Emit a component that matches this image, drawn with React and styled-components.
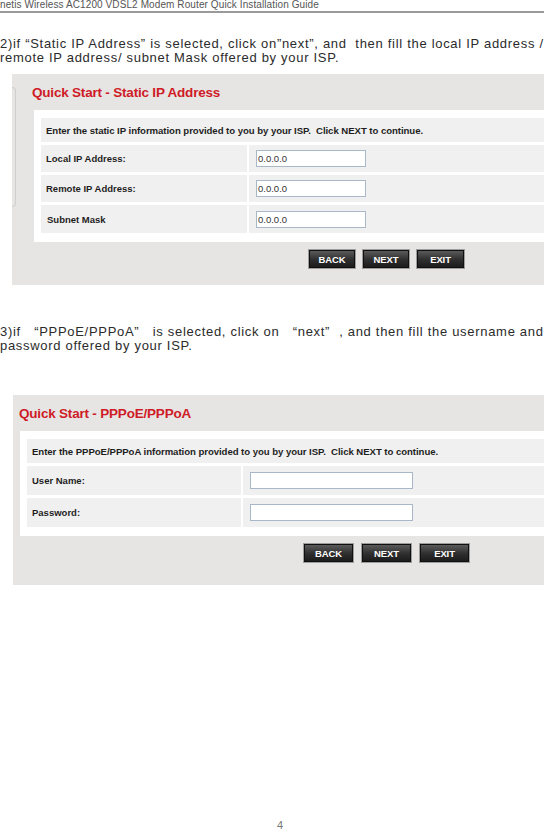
import React from 'react'
import styled, { createGlobalStyle } from 'styled-components'

const Global = createGlobalStyle`
body {
  margin: 0;
  background: #fff;
}
`;

const Page = styled.div`
width: 544px;
height: 831px;
display: flex;
flex-direction: column;
overflow: hidden;
font-family: "Liberation Sans", Arial, sans-serif;
`;

const RunningHead = styled.div`
height: 11px;
border-bottom: 2px solid #9a9a9a;
font-size: 10px;
line-height: 9px;
letter-spacing: 0.1px;
color: #555;
white-space: nowrap;
`;

const Para = styled.p`
margin: ${p => p.$top}px 0 0 0;
font-size: 13px;
line-height: 14px;
letter-spacing: 0.7px;
color: #2b2b2b;
white-space: pre-wrap;
`;

const Quote = styled.span`
margin: ${p => (p.$close ? '0 9px 0 0' : '0 0 0 9px')};
`;

const Shot = styled.div`
margin: ${p => p.$top}px 0 0 ${p => p.$left}px;
height: ${p => p.$h}px;
background: #e6e5e4;
display: flex;
font-family: "Liberation Sans", Arial, sans-serif;
`;

const NavEdge = styled.div`
flex: none;
width: 3px;
height: 118px;
margin-top: 13px;
border: 1px solid #cfcfcf;
border-left: none;
border-radius: 0 8px 8px 0;
`;

const Body = styled.div`
flex: 1;
padding-left: ${p => p.$pad}px;
display: flex;
flex-direction: column;
`;

const Title = styled.div`
height: 36px;
margin-left: ${p => p.$indent}px;
display: flex;
align-items: center;
font-size: 13.5px;
font-weight: bold;
letter-spacing: -0.2px;
color: #cf1b26;
`;

const Card = styled.div`
background: #fff;
padding: 8px 0 9px 7px;
display: flex;
flex-direction: column;
gap: 3px;
`;

const Intro = styled.div`
height: 24px;
background: #f1f0f0;
display: flex;
align-items: center;
padding-left: 5px;
font-size: 9.6px;
font-weight: bold;
letter-spacing: -0.05px;
color: #1e1e1e;
white-space: nowrap;
`;

const Row = styled.div`
height: ${p => p.$h}px;
display: grid;
grid-template-columns: ${p => p.$label}px 1fr;
gap: 2px;
`;

const Label = styled.div`
background: #f1f0f0;
display: flex;
align-items: center;
padding-left: ${p => p.$indent || 5}px;
font-size: 9.5px;
font-weight: bold;
color: #1e1e1e;
`;

const Cell = styled.div`
background: #f1f0f0;
display: flex;
align-items: center;
padding-left: 7px;
`;

const Field = styled.div`
box-sizing: border-box;
width: ${p => p.$w}px;
height: 17px;
border: 1px solid #a9b8c9;
background: #fff;
display: flex;
align-items: center;
padding-left: 1px;
font-size: 9.5px;
color: #333;
`;

const Buttons = styled.div`
display: flex;
gap: ${p => p.$gap}px;
margin: 8px 0 0 ${p => p.$left}px;
`;

const Btn = styled.div`
box-sizing: border-box;
width: ${p => p.$w}px;
height: 18px;
background: linear-gradient(#5a5a5a, #2e2e2e 55%, #1c1c1c);
border: 1px solid #101010;
box-shadow: 0 0 0 1px #9d9d9d;
display: flex;
align-items: center;
justify-content: center;
font-size: 9.5px;
font-weight: bold;
color: #fff;
letter-spacing: -0.1px;
`;

const Folio = styled.div`
margin-top: auto;
text-align: center;
font-size: 11px;
line-height: 12px;
color: #777;
padding-left: 16px;
`;

const staticRows = [
  { label: 'Local IP Address:', h: 27 },
  { label: 'Remote IP Address:', h: 27 },
  { label: 'Subnet Mask', h: 28, indent: 6 },
];

export default function App() {
  return (
    <Page>
      <Global />
      <RunningHead>netis Wireless AC1200 VDSL2 Modem Router Quick Installation Guide</RunningHead>
      <Para $top={24}>
        {'2)if “Static IP Address” is selected, click on”next”, and  then fill the local IP address /\nremote IP address/ subnet Mask offered by your ISP.'}
      </Para>

      <Shot $top={9} $left={12} $h={211}>
        <NavEdge />
        <Body $pad={18}>
          <Title $indent={-2}>Quick Start - Static IP Address</Title>
          <Card>
            <Intro>Enter the static IP information provided to you by your ISP.&nbsp; Click NEXT to continue.</Intro>
            {staticRows.map(r => (
              <Row key={r.label} $h={r.h} $label={206}>
                <Label $indent={r.indent}>{r.label}</Label>
                <Cell>
                  <Field $w={110}>0.0.0.0</Field>
                </Cell>
              </Row>
            ))}
          </Card>
          <Buttons $left={275} $gap={8}>
            <Btn $w={46}>BACK</Btn>
            <Btn $w={46}>NEXT</Btn>
            <Btn $w={47}>EXIT</Btn>
          </Buttons>
        </Body>
      </Shot>

      <Para $top={40}>
        3)if <Quote>“</Quote>PPPoE/PPPoA<Quote $close>”</Quote> is selected, click on <Quote>“</Quote>next<Quote $close>”</Quote>, and then fill the username and{'\n'}password offered by your ISP.
      </Para>

      <Shot $top={42} $left={13} $h={190}>
        <Body $pad={7}>
          <Title $indent={-1}>Quick Start - PPPoE/PPPoA</Title>
          <Card>
            <Intro>Enter the PPPoE/PPPoA information provided to you by your ISP.&nbsp; Click NEXT to continue.</Intro>
            <Row $h={29} $label={214}>
              <Label>User Name:</Label>
              <Cell><Field $w={163} /></Cell>
            </Row>
            <Row $h={29} $label={214}>
              <Label>Password:</Label>
              <Cell><Field $w={163} /></Cell>
            </Row>
          </Card>
          <Buttons $left={284} $gap={9}>
            <Btn $w={49}>BACK</Btn>
            <Btn $w={49}>NEXT</Btn>
            <Btn $w={49}>EXIT</Btn>
          </Buttons>
        </Body>
      </Shot>

      <Folio>4</Folio>
    </Page>
  )
}
